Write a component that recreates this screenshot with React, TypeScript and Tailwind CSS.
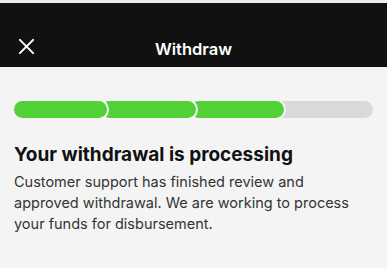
import React from 'react';

const App: React.FC = () => {
  return (
    <div className="w-[387px] h-[268px] bg-[#f4f4f4] overflow-hidden" style={{ fontFamily: 'Inter, "Liberation Sans", sans-serif' }}>
      <div className="h-[3px] bg-[#ececec]" />
      <header className="relative h-[64px] bg-[#111111] flex items-end pb-[5px]">
        <button className="absolute left-[18px] bottom-[12px] text-white">
          <svg width="17" height="17" viewBox="0 0 18 18" fill="none" stroke="currentColor" strokeWidth="2.2" strokeLinecap="round">
            <path d="M2 2L16 16M16 2L2 16" />
          </svg>
        </button>
        <h1 className="w-full text-center text-white text-[16.5px] font-semibold leading-[26px]">Withdraw</h1>
      </header>

      <div className="px-[14px] pt-[34px]">
        <div className="relative h-[17px] rounded-full bg-[#d9d9d9]">
          <div className="absolute left-0 top-0 h-full w-[270px] flex">
            <div className="relative z-[3] h-full w-[93px] rounded-full bg-[#52d137] ring-2 ring-[#f4f4f4]" />
            <div className="relative z-[2] -ml-[6px] h-full w-[95px] rounded-full bg-[#52d137] ring-2 ring-[#f4f4f4]" />
            <div className="relative z-[1] -ml-[6px] h-full w-[94px] rounded-full bg-[#52d137] ring-2 ring-[#f4f4f4]" />
          </div>
        </div>

        <h2 className="mt-[24px] text-[19px] font-bold text-[#111111] leading-[26px]">Your withdrawal is processing</h2>
        <p className="mt-[3px] max-w-[340px] text-[14.5px] text-[#333333] leading-[21px]">
          Customer support has finished review and approved withdrawal. We are working to process your funds for disbursement.
        </p>
      </div>
    </div>
  );
};

export default App;
